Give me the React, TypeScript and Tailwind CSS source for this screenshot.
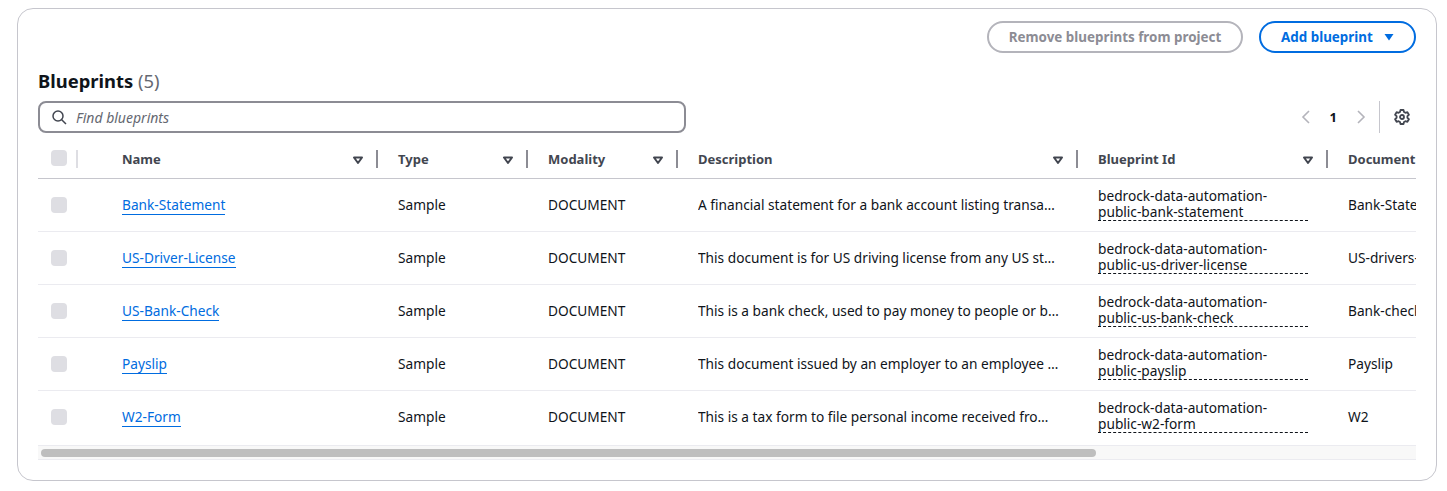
const rows = [
  {
    name: "Bank-Statement",
    description: "A financial statement for a bank account listing transactions over a period of time",
    id: "public-bank-statement",
    doc: "Bank-Statement",
  },
  {
    name: "US-Driver-License",
    description: "This document is for US driving license from any US state or territory",
    id: "public-us-driver-license",
    doc: "US-drivers-License",
  },
  {
    name: "US-Bank-Check",
    description: "This is a bank check, used to pay money to people or businesses",
    id: "public-us-bank-check",
    doc: "Bank-check",
  },
  {
    name: "Payslip",
    description: "This document issued by an employer to an employee showing wages",
    id: "public-payslip",
    doc: "Payslip",
  },
  {
    name: "W2-Form",
    description: "This is a tax form to file personal income received from an employer",
    id: "public-w2-form",
    doc: "W2",
  },
];

const SortIcon = () => (
  <svg viewBox="0 0 16 16" className="h-4 w-4 text-[#424650]" fill="none">
    <path d="M4 5.5h8L8 11z" stroke="currentColor" strokeWidth="2" strokeLinejoin="round" />
  </svg>
);

const Checkbox = () => <div className="h-4 w-4 rounded-[4px] bg-[#dedee3]" />;

const columns = [
  { label: "Name", width: "w-[276px]", sortable: true },
  { label: "Type", width: "w-[150px]", sortable: true },
  { label: "Modality", width: "w-[150px]", sortable: true },
  { label: "Description", width: "w-[400px]", sortable: true },
  { label: "Blueprint Id", width: "w-[250px]", sortable: true },
  { label: "Document", width: "w-[150px]", sortable: false },
];

export default function App() {
  return (
    <div className="min-h-[491px] bg-white pl-[17px] pr-[10px] pt-2 font-['Noto_Sans',sans-serif] text-[13.7px] text-[#0f141a]">
      <div className="h-[473px] rounded-2xl border border-[#c6c6cd] pl-5 pr-5 pt-3">
        <div className="flex justify-end gap-4">
          <button className="h-8 w-[256px] rounded-full border-2 border-[#b4b4bb] text-[13.4px] font-bold text-[#8c8c94]">
            Remove blueprints from project
          </button>
          <button className="flex h-8 w-[157px] items-center gap-2 rounded-full border-2 border-[#006ce0] pl-[20px] text-[13.4px] font-bold text-[#006ce0]">
            Add blueprint
            <svg viewBox="0 0 16 16" className="h-4 w-4" fill="currentColor">
              <path d="M3.5 5h9L8 11.5z" />
            </svg>
          </button>
        </div>

        <h2 className="mt-4 h-[24px] text-[18.4px] leading-[24px] font-bold">
          Blueprints <span className="font-normal text-[#656871]">(5)</span>
        </h2>

        <div className="mt-2 flex items-start justify-between">
          <div className="flex h-8 w-[648px] items-center gap-2 rounded-lg border-2 border-[#8c8c94] pl-[11px]">
            <svg viewBox="0 0 16 16" className="h-4 w-4 text-[#424650]" fill="none" stroke="currentColor" strokeWidth="1.5">
              <circle cx="7" cy="7" r="5" />
              <path d="m15 15-4.5-4.5" />
            </svg>
            <span className="pl-px text-[14px] italic text-[#656871]">Find blueprints</span>
          </div>
          <div className="flex h-8 items-center pr-[6px]">
            <svg viewBox="0 0 16 16" className="h-4 w-4 text-[#b4b4bb]" fill="none" stroke="currentColor" strokeWidth="1.6">
              <path d="M11 2 5 8l6 6" />
            </svg>
            <span className="mx-4 pt-0.5 text-[13px] font-bold">1</span>
            <svg viewBox="0 0 16 16" className="h-4 w-4 text-[#b4b4bb]" fill="none" stroke="currentColor" strokeWidth="1.6">
              <path d="m5 2 6 6-6 6" />
            </svg>
            <div className="ml-[10px] h-8 w-px bg-[#c6c6cd]" />
            <svg viewBox="0 0 16 16" className="ml-[14px] h-4 w-4 text-[#424650]" fill="none" stroke="currentColor" strokeWidth="1.8" strokeLinejoin="round">
              <path d="M6.5 1h3l.5 2 1.4.8 2-.6 1.5 2.6-1.5 1.4v1.600l1.500 1.400-1.500 2.600-2-.6-1.400.8-.5 2h-3l-.5-2-1.400-.8-2 .6-1.500-2.600 1.500-1.400V7.200L1.100 5.800l1.500-2.600 2 .6L6 3z" />
              <circle cx="8" cy="8" r="2" />
            </svg>
          </div>
        </div>

        <div className="mt-[5px] w-[1378px] overflow-hidden">
          <table className="w-[1440px] table-fixed border-collapse text-left">
            <thead>
              <tr className="h-[40px] border-b border-[#c6c6cd]">
                <th className="relative w-[64px] pl-[13px] font-normal">
                  <Checkbox />
                  <span className="absolute left-[38px] top-[12px] h-[18px] w-0.5 bg-[#dedee3]" />
                </th>
                {columns.map((col) => (
                  <th key={col.label} className={`relative ${col.width} pl-5 pr-3 pt-1 text-[13px] font-bold text-[#424650]`}>
                    <div className="flex items-center justify-between">
                      <span className="whitespace-nowrap">{col.label}</span>
                      {col.sortable && <SortIcon />}
                    </div>
                    {col.sortable && <span className="absolute right-0 top-[12px] h-[18px] w-0.5 bg-[#8c8c94]" />}
                  </th>
                ))}
              </tr>
            </thead>
            <tbody>
              {rows.map((row) => (
                <tr key={row.name} className="h-[53px] border-b border-[#ebebf0] last:border-b-0">
                  <td className="pl-[13px]">
                    <Checkbox />
                  </td>
                  <td className="pl-5 pt-0.5">
                    <a className="border-b border-[#006ce0] text-[#006ce0]">{row.name}</a>
                  </td>
                  <td className="pl-5 pt-0.5">Sample</td>
                  <td className="pl-5 pt-0.5">DOCUMENT</td>
                  <td className="pl-5 pr-[18px] pt-0.5">
                    <div className="truncate">{row.description}</div>
                  </td>
                  <td className="pl-5">
                    <div className="w-[210px] border-b border-dashed border-[#0f141a] leading-[16px]">
                      bedrock-data-automation-
                      <br />
                      {row.id}
                    </div>
                  </td>
                  <td className="overflow-hidden whitespace-nowrap pl-5 pt-0.5">{row.doc}</td>
                </tr>
              ))}
            </tbody>
          </table>
          <div className="mt-0.5 h-[15px] border-y border-[#ebebf0] bg-[#f8f8f8] px-[3px] py-[3px]">
            <div className="h-2 w-[1055px] rounded-full bg-[#bebebe]" />
          </div>
        </div>
      </div>
    </div>
  );
}
